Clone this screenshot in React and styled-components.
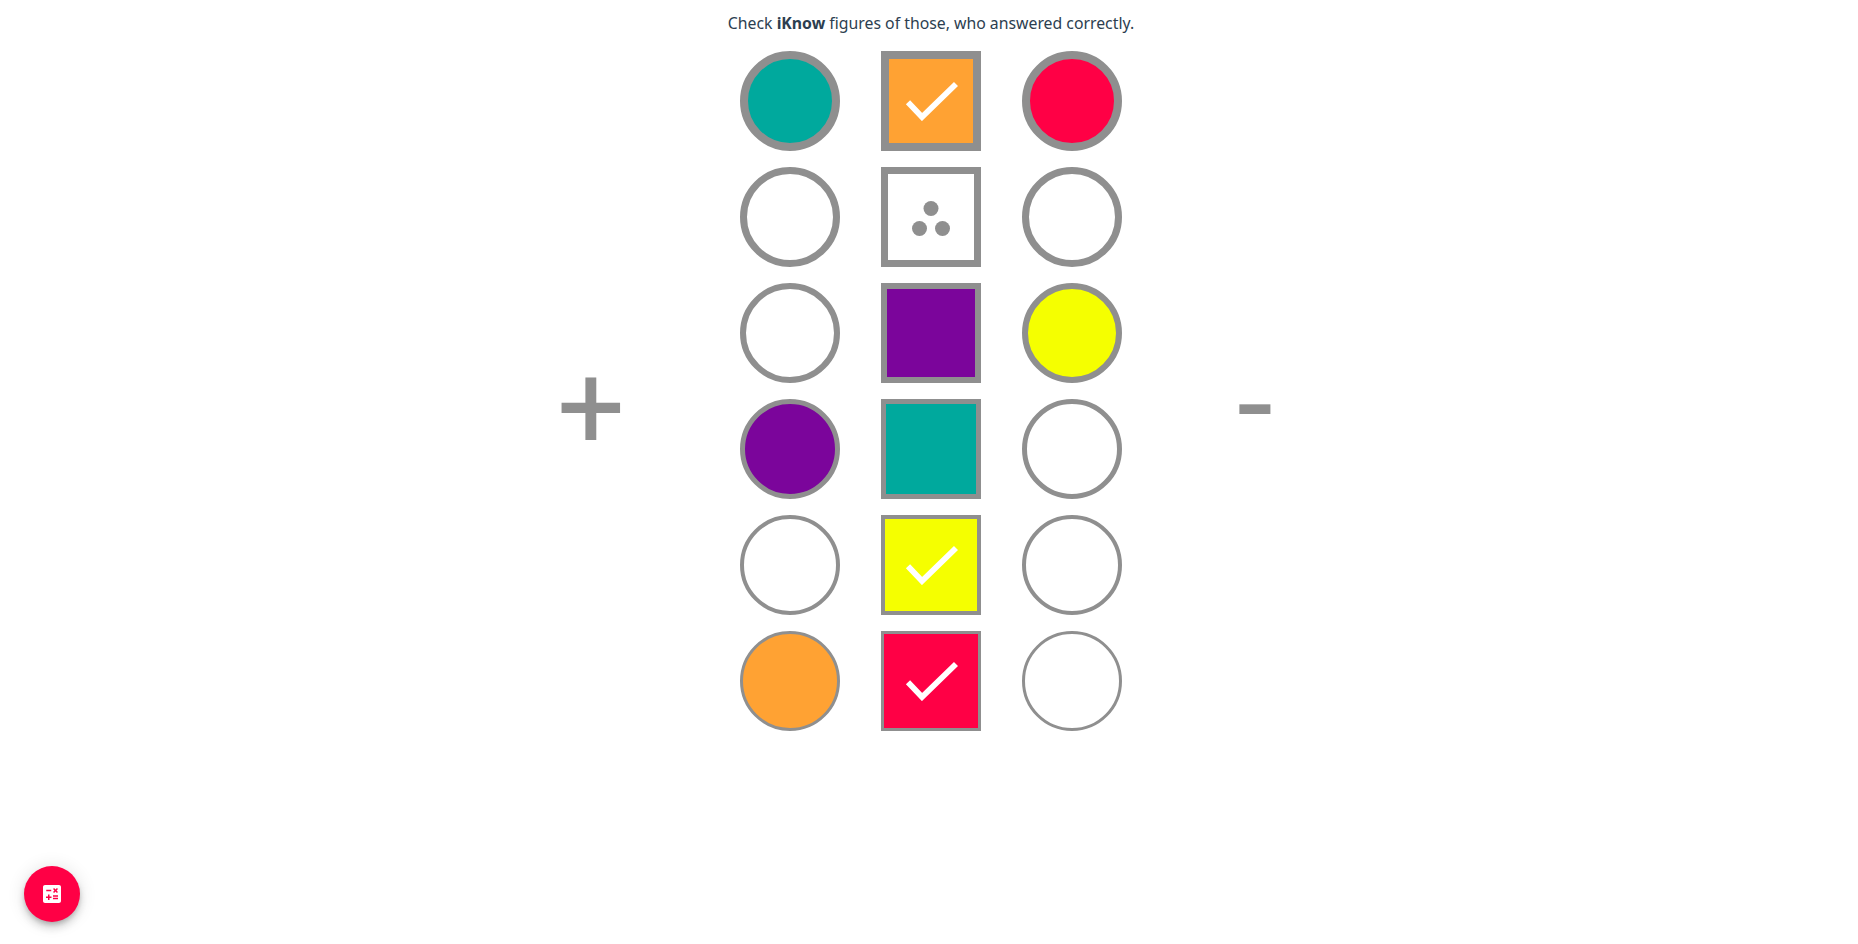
import React from "react";
import styled, { createGlobalStyle } from "styled-components";
import { MdCalculate } from "react-icons/md";

const GREY = "#8f8f8f";
const colors = {
  teal: "#00a99d",
  orange: "#ffa233",
  red: "#ff0045",
  yellow: "#f5ff00",
  purple: "#7b059b",
};

// each row has a thinner border than the one above it
const rows = [
  { border: 8, cells: [{ color: "teal" }, { color: "orange", check: true }, { color: "red" }] },
  { border: 7, cells: [{}, { dots: true }, {}] },
  { border: 6, cells: [{}, { color: "purple" }, { color: "yellow" }] },
  { border: 5, cells: [{ color: "purple" }, { color: "teal" }, {}] },
  { border: 4, cells: [{}, { color: "yellow", check: true }, {}] },
  { border: 3, cells: [{ color: "orange" }, { color: "red", check: true }, {}] },
];

const Check = () => (
  <CheckIcon viewBox="0 0 54 40">
    <polyline points="4,21.3 18,36 52,3" />
  </CheckIcon>
);

const Dots = () => (
  <DotsIcon viewBox="0 0 38 37">
    <circle cx="19" cy="9.5" r="7.5" />
    <circle cx="7.5" cy="29.5" r="7.5" />
    <circle cx="30.5" cy="29.5" r="7.5" />
  </DotsIcon>
);

const App = () => {
  return (
    <>
      <GlobalStyle />
      <Page>
        <Title>
          Check <b>iKnow</b> figures of those, who answered correctly.
        </Title>
        <Board>
          <Plus>+</Plus>
          <Grid>
            {rows.map((row, r) =>
              row.cells.map((cell, c) => (
                <Figure
                  key={`${r}-${c}`}
                  $round={c !== 1}
                  $border={row.border}
                  $fill={colors[cell.color]}
                >
                  {cell.check && <Check />}
                  {cell.dots && <Dots />}
                </Figure>
              ))
            )}
          </Grid>
          <Minus>-</Minus>
        </Board>
      </Page>
      <Fab aria-label="calculator">
        <MdCalculate size={24} />
      </Fab>
    </>
  );
};

const GlobalStyle = createGlobalStyle`
  html, body {
    margin: 0;
    background: #fff;
  }
  body {
    font-family: "Noto Sans", "Open Sans", sans-serif;
    color: #2c3e50;
    overflow: hidden;
  }
`;

const Page = styled.div`
  height: 944px;
  padding-left: 4px;
  box-sizing: border-box;
`;

const Title = styled.p`
  margin: 0;
  padding-top: 12px;
  height: 51px;
  box-sizing: border-box;
  text-align: center;
  font-size: 15.8px;
  line-height: 22px;
`;

const Board = styled.div`
  display: flex;
  justify-content: center;
  align-items: center;
`;

const Sign = styled.div`
  width: 72px;
  font-family: Roboto, sans-serif;
  font-size: 120px;
  line-height: 140px;
  color: ${GREY};
`;

const Plus = styled(Sign)`
  padding-top: 34px;
  margin-left: 1px;
  margin-right: 115px;
  text-align: right;
`;

const Minus = styled(Sign)`
  font-size: 130px;
  padding-top: 25px;
  margin-left: 115px;
  margin-right: 1px;
`;

const Grid = styled.div`
  display: grid;
  grid-template-columns: repeat(3, 100px);
  grid-auto-rows: 100px;
  column-gap: 41px;
  row-gap: 16px;
`;

const Figure = styled.div`
  display: flex;
  align-items: center;
  justify-content: center;
  box-sizing: border-box;
  border: ${(p) => p.$border}px solid ${GREY};
  border-radius: ${(p) => (p.$round ? "50%" : "0")};
  background: ${(p) => p.$fill || "#fff"};
`;

const CheckIcon = styled.svg`
  width: 54px;
  height: 40px;
  fill: none;
  stroke: #fff;
  stroke-width: 5.8;
`;

const DotsIcon = styled.svg`
  width: 38px;
  height: 37px;
  fill: ${GREY};
`;

const Fab = styled.button`
  position: fixed;
  left: 24px;
  bottom: 22px;
  width: 56px;
  height: 56px;
  padding: 0;
  display: flex;
  align-items: center;
  justify-content: center;
  border: none;
  border-radius: 50%;
  background: #ff0045;
  color: #fff;
  box-shadow: 0 3px 5px -1px rgba(0, 0, 0, 0.2), 0 6px 10px 0 rgba(0, 0, 0, 0.14),
    0 1px 18px 0 rgba(0, 0, 0, 0.12);
`;

export default App;
